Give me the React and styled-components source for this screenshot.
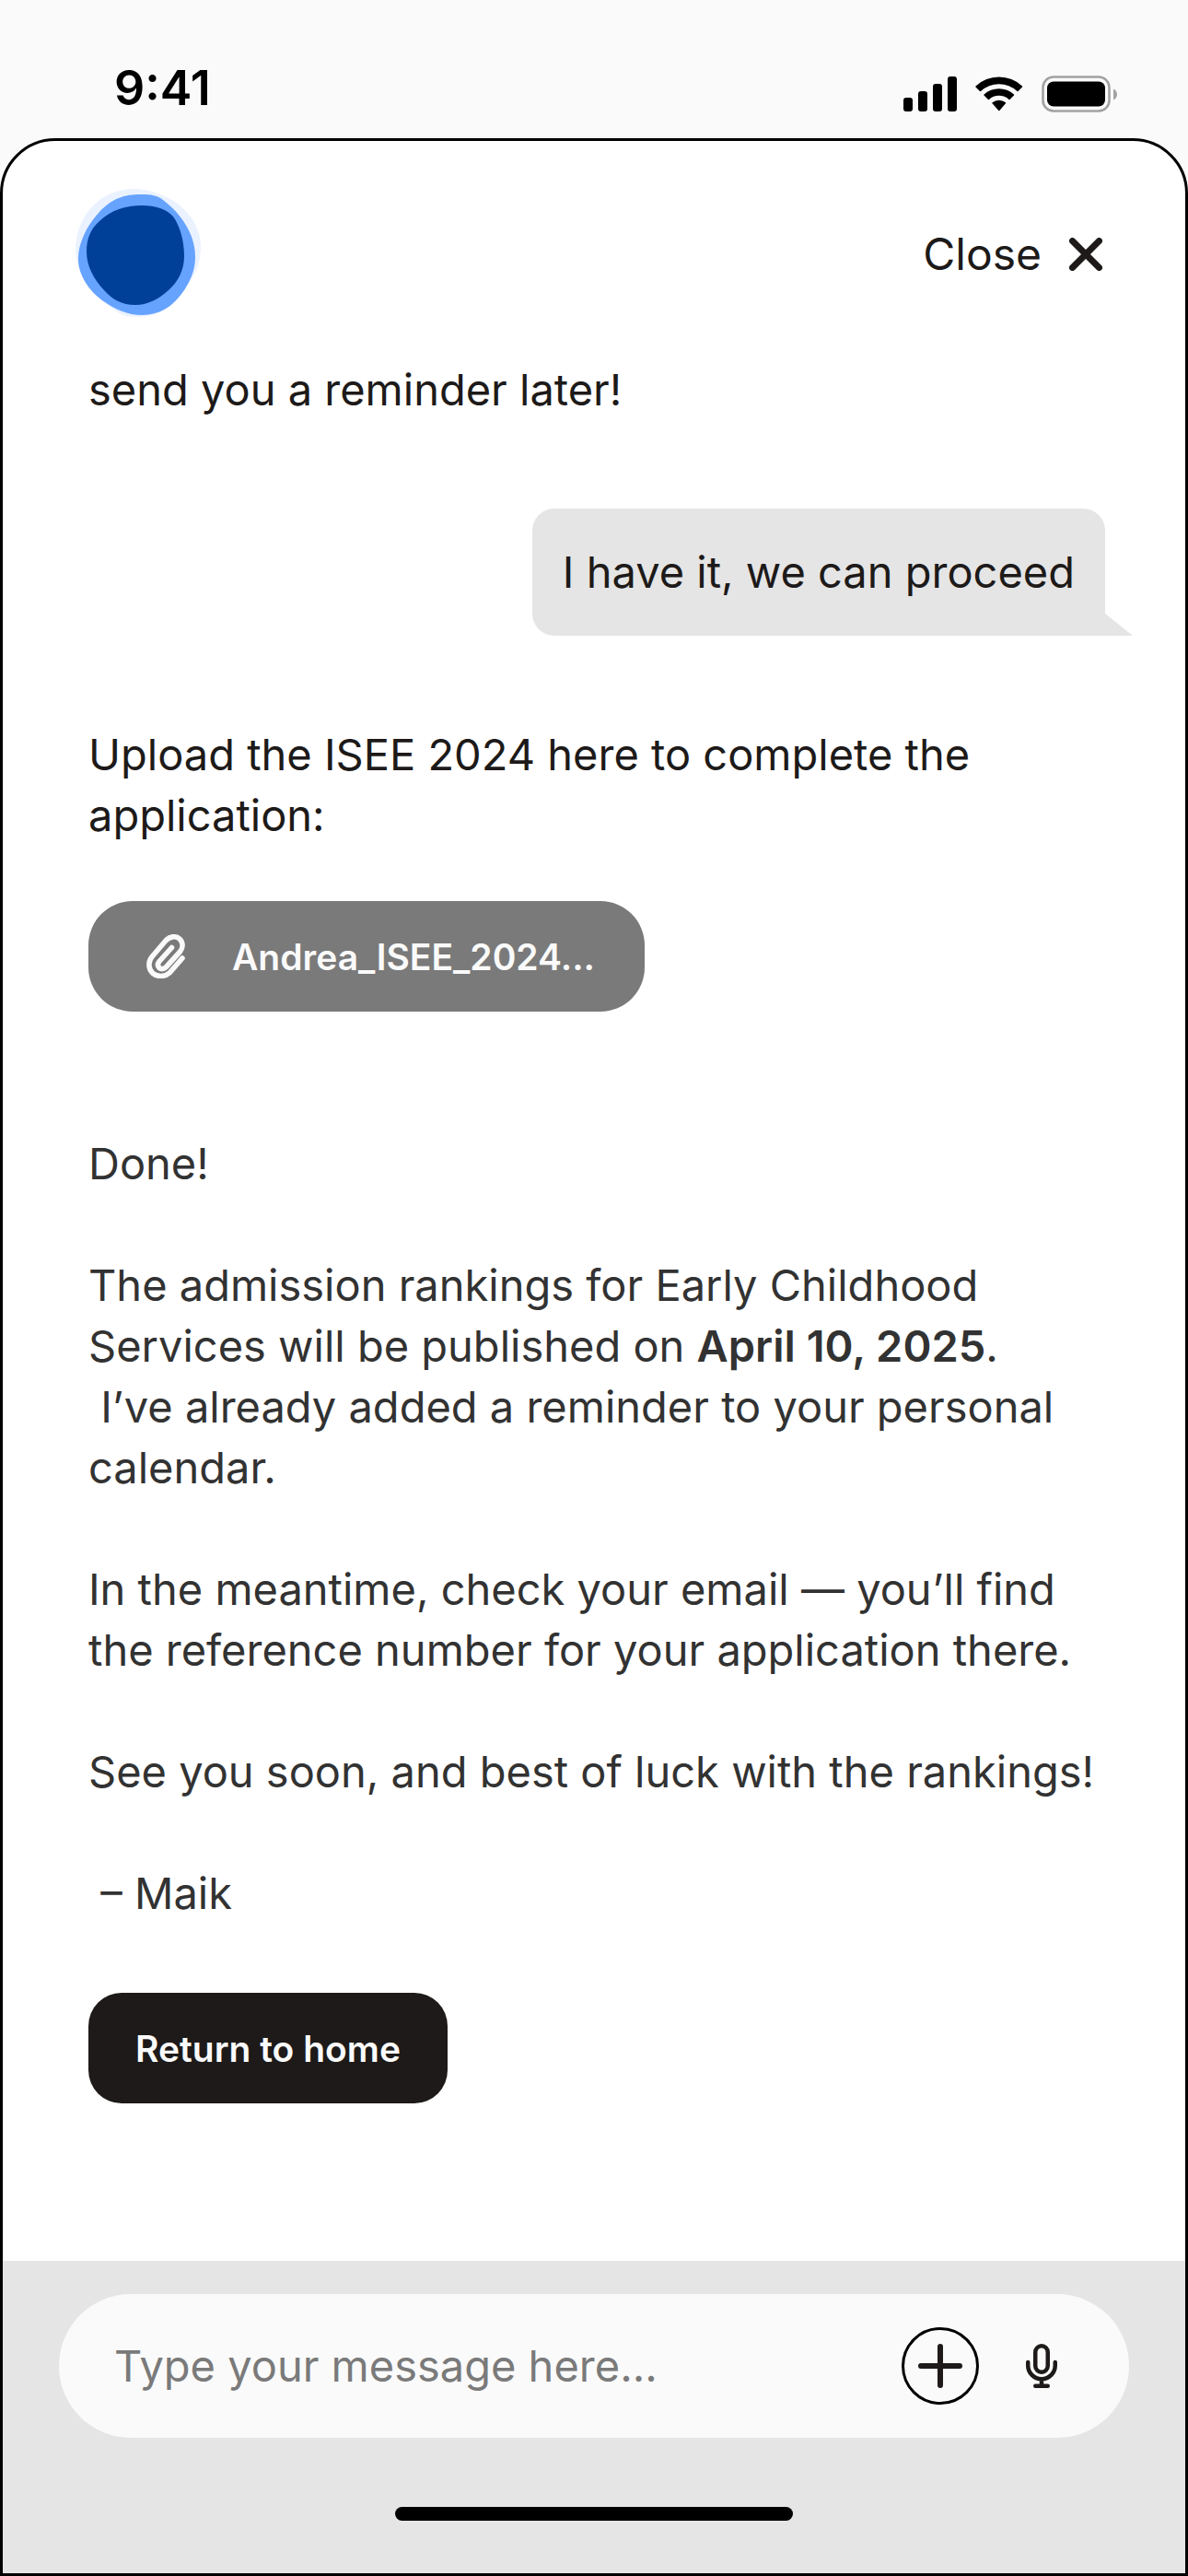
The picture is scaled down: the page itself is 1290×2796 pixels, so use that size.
import React, { useState } from "react";
import styled, { createGlobalStyle, css } from "styled-components";

const GlobalStyle = createGlobalStyle`
  * {
    box-sizing: border-box;
  }

  body {
    margin: 0;
    background: #fafafa;
    color: #1d1a19;
    font-family: Inter, "Liberation Sans", sans-serif;
  }
`;

const Screen = styled.div`
  display: flex;
  flex-direction: column;
  min-height: 100vh;
`;

const StatusBar = styled.div`
  display: flex;
  align-items: center;
  justify-content: space-between;
  height: 150px;
  padding: 54px 76px 0 124px;
`;

const Time = styled.time`
  color: #000;
  font-size: 52px;
  font-weight: 600;
  line-height: 60px;
  margin-top: -12px;
`;

const StatusIcons = styled.div`
  display: flex;
  align-items: center;
  gap: 20px;
`;

const Sheet = styled.main`
  display: flex;
  flex: 1;
  flex-direction: column;
  border: 3px solid #000;
  border-radius: 60px 60px 0 0;
  background: #fff;
`;

const Header = styled.header`
  display: flex;
  align-items: center;
  justify-content: space-between;
  padding: 51px 90px 42px 78px;
`;

const CloseButton = styled.button`
  display: flex;
  align-items: center;
  gap: 30px;
  padding: 0;
  border: none;
  background: none;
  color: #1d1a19;
  font-family: inherit;
  font-size: 48px;
  line-height: 66px;
  cursor: pointer;
`;

const Conversation = styled.section`
  display: flex;
  flex: 1;
  flex-direction: column;
  align-items: flex-start;
  padding: 0 87px 171px 93px;
`;

const Message = styled.div`
  color: ${(props) => (props.$soft ? "#323232" : "#1d1a19")};
  font-size: 47px;
  line-height: 66px;
  white-space: pre-wrap;

  p {
    margin: 0 0 66px;
  }

  p:last-child {
    margin-bottom: 0;
  }

  strong {
    font-weight: 600;
  }
`;

const Bubble = styled.div`
  position: relative;
  align-self: flex-end;
  margin: 96px 0;
  padding: 36px 33px;
  border-radius: 24px 24px 0 24px;
  background: #e5e5e5;
  font-size: 47px;
  line-height: 66px;

  &::after {
    content: "";
    position: absolute;
    bottom: 0;
    left: 100%;
    width: 30px;
    height: 24px;
    background: #e5e5e5;
    clip-path: polygon(0 0, 100% 100%, 0 100%);
  }
`;

const pill = css`
  display: flex;
  align-items: center;
  height: 120px;
  border: none;
  color: #fafafa;
  font-family: inherit;
  font-size: 39px;
  font-weight: 600;
  cursor: pointer;
`;

const FileButton = styled.button`
  ${pill}
  gap: 51px;
  margin: 60px 0 132px;
  padding: 0 54px 0 63px;
  border-radius: 48px;
  background: #7a7a7a;
`;

const HomeButton = styled.button`
  ${pill}
  margin-top: 75px;
  padding: 0 51px;
  border-radius: 36px;
  background: #1d1a19;
`;

const Footer = styled.footer`
  display: flex;
  flex-direction: column;
  align-items: center;
  padding: 36px 61px 57px;
  background: #e5e5e5;
`;

const Composer = styled.form`
  display: flex;
  align-items: center;
  width: 100%;
  height: 156px;
  padding: 0 59px 0 60px;
  border-radius: 78px;
  background: #fafafa;
`;

const MessageInput = styled.input`
  flex: 1;
  min-width: 0;
  padding: 0;
  border: none;
  outline: none;
  background: none;
  color: #1d1a19;
  font-family: inherit;
  font-size: 47px;
  line-height: 66px;

  &::placeholder {
    color: #7a7a7a;
    opacity: 1;
  }
`;

const IconButton = styled.button`
  display: flex;
  align-items: center;
  justify-content: center;
  width: ${(props) => (props.$round ? "84px" : "72px")};
  height: 84px;
  padding: 0;
  border: ${(props) => (props.$round ? "3px solid #000" : "none")};
  border-radius: 50%;
  background: none;
  margin-left: ${(props) => (props.$round ? "0" : "32px")};
  cursor: pointer;
`;

const HomeIndicator = styled.div`
  width: 432px;
  height: 15px;
  margin-top: 75px;
  border-radius: 8px;
  background: #000;
`;

const SignalIcon = () => (
  <svg width="58" height="38" viewBox="0 0 58 38" aria-hidden="true">
    <rect x="0" y="23" width="10" height="15" rx="3" />
    <rect x="16" y="16" width="10" height="22" rx="3" />
    <rect x="32" y="8" width="10" height="30" rx="3" />
    <rect x="48" y="0" width="10" height="38" rx="3" />
  </svg>
);

const WifiIcon = () => (
  <svg width="52" height="38" viewBox="0 0 52 38" aria-hidden="true">
    <path d="M0.5 11.5 Q0 11 0.5 10.5 A37 37 0 0 1 51 10.5 Q51.5 11 51 11.5 L46.5 16 Q46 16.3 45.5 16 A29 29 0 0 0 6 16 Q5.5 16.3 5 16 Z" />
    <path d="M9.5 20.5 Q9 20 9.5 19.5 A24 24 0 0 1 42 19.5 Q42.5 20 42 20.5 L37.5 25 Q37 25.3 36.5 25 A16 16 0 0 0 15 25 Q14.5 25.3 14 25 Z" />
    <path d="M18.5 29.2 Q18 28.7 18.5 28.2 A11.5 11.5 0 0 1 33 28.2 Q33.5 28.7 33 29.2 L26.3 37 Q25.8 37.5 25.3 37 Z" />
  </svg>
);

const BatteryIcon = () => (
  <svg width="83" height="40" viewBox="0 0 83 40" aria-hidden="true">
    <rect x="1.5" y="1.5" width="72" height="37" rx="11.5" fill="none" stroke="#a2a2a2" strokeWidth="2.6" />
    <rect x="6" y="6.5" width="63" height="27" rx="7" />
    <path d="M78 14.5 C80.5 15.7 82 17.8 82 20.5 C82 23.2 80.5 25.3 78 26.5 Z" fill="#a2a2a2" />
  </svg>
);

const AssistantLogo = () => (
  <svg width="144" height="144" viewBox="0 3 144 144" role="img" aria-label="Maik">
    <path d="M65 4 C80 4 91 9 104 15 C122 25 137 44 137 67 C137 86 129 101 120 113 C105 135 88 143 68 143 C54 143 49 140 40 133 C19 119 1 95 1 70 C1 38 24 4 65 4 Z" fill="#ebf2ff" />
    <path d="M72 10 C83 10 90 11 96 16 C117 32 131 54 131 78 C131 92 126 103 119 114 C107 132 92 141 73 141 C58 141 44 135 30 125 C15 114 4 97 4 80 C4 60 16 41 27 29 C41 14 54 10 72 10 Z" fill="#66a3ff" />
    <path d="M73 22 C88 22 100 26 107 34 C115 45 119 62 119 77 C119 93 112 105 102 114 C91 124 79 130 66 130 C51 130 41 124 32 114 C21 102 13 88 13 72 C13 57 18 47 27 39 C40 27 55 22 73 22 Z" fill="#004099" />
  </svg>
);

const CloseIcon = () => (
  <svg width="36" height="36" viewBox="0 0 36 36" fill="none" stroke="#1d1a19" strokeWidth="7" strokeLinecap="round" aria-hidden="true">
    <path d="M3.5 3.5 L32.5 32.5 M32.5 3.5 L3.5 32.5" />
  </svg>
);

const ClipIcon = () => (
  <svg width="42" height="48" viewBox="0 0 42 48" fill="none" stroke="#fafafa" strokeWidth="5.6" strokeLinecap="round" aria-hidden="true">
    <path d="M39 26 L25 42 C20 46.5 12 46.5 7 42.5 C2 38 1.5 30 6 24.5 L20.5 7.5 C25 2 32 1.5 36 5 C40 9 40 14.5 36.5 19 L21.5 35.5 C19 38 16 38.2 14 36.5 C12 34.5 12 32 14 29.5 L27.5 14.5" />
  </svg>
);

const PlusIcon = () => (
  <svg width="48" height="48" viewBox="0 0 48 48" fill="none" stroke="#1d1a19" strokeWidth="6" strokeLinecap="round" aria-hidden="true">
    <path d="M24 3 V45 M3 24 H45" />
  </svg>
);

const MicIcon = () => (
  <svg width="34" height="48" viewBox="0 0 34 48" fill="none" stroke="#1d1a19" strokeWidth="4.5" strokeLinecap="round" aria-hidden="true">
    <rect x="10.25" y="2.25" width="13.5" height="28.5" rx="6.75" />
    <path d="M2.25 20 V23.5 A14.75 14.75 0 0 0 31.75 23.5 V20 M17 38.5 V45 M10.25 45.7 H23.75" />
  </svg>
);

const App = () => {
  const [message, setMessage] = useState("");

  const handleSubmit = (e) => {
    e.preventDefault();
    setMessage("");
  };

  return (
    <>
      <GlobalStyle />
      <Screen>
        <StatusBar>
          <Time>9:41</Time>
          <StatusIcons>
            <SignalIcon />
            <WifiIcon />
            <BatteryIcon />
          </StatusIcons>
        </StatusBar>

        <Sheet>
          <Header>
            <AssistantLogo />
            <CloseButton type="button">
              Close
              <CloseIcon />
            </CloseButton>
          </Header>

          <Conversation>
            <Message>send you a reminder later!</Message>

            <Bubble>I have it, we can proceed</Bubble>

            <Message>
              Upload the ISEE 2024 here to complete the application:
            </Message>

            <FileButton type="button">
              <ClipIcon />
              Andrea_ISEE_2024...
            </FileButton>

            <Message $soft>
              <p>Done!</p>
              <p>
                The admission rankings for Early Childhood
                <br />
                Services will be published on <strong>April 10, 2025</strong>.
                <br />
                {" "}I’ve already added a reminder to your personal calendar.
              </p>
              <p>
                In the meantime, check your email — you’ll find
                <br />
                the reference number for your application there.
              </p>
              <p>See you soon, and best of luck with the rankings!</p>
              <p>{" "}– Maik</p>
            </Message>

            <HomeButton type="button">Return to home</HomeButton>
          </Conversation>

          <Footer>
            <Composer onSubmit={handleSubmit}>
              <MessageInput
                type="text"
                aria-label="Message"
                placeholder="Type your message here..."
                value={message}
                onChange={(e) => setMessage(e.target.value)}
              />
              <IconButton type="button" aria-label="Add attachment" $round>
                <PlusIcon />
              </IconButton>
              <IconButton type="button" aria-label="Record voice message">
                <MicIcon />
              </IconButton>
            </Composer>
            <HomeIndicator />
          </Footer>
        </Sheet>
      </Screen>
    </>
  );
};

export default App;
